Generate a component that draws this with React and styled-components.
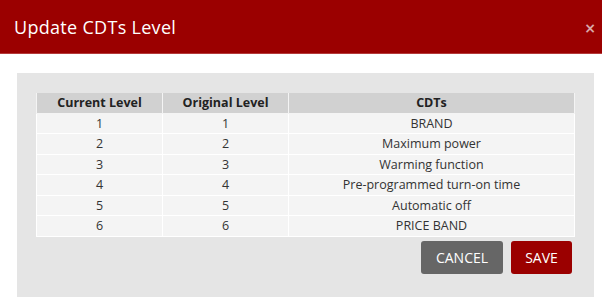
import React from "react";
import styled, { createGlobalStyle } from "styled-components";

const GlobalStyle = createGlobalStyle`
  body {
    margin: 0;
    background: #fff;
    font-family: "Open Sans", "Liberation Sans", sans-serif;
  }
`;

const rows = [
  [1, 1, "BRAND"],
  [2, 2, "Maximum power"],
  [3, 3, "Warming function"],
  [4, 4, "Pre-programmed turn-on time"],
  [5, 5, "Automatic off"],
  [6, 6, "PRICE BAND"],
];

const App = () => {
  return (
    <Modal>
      <GlobalStyle />
      <Header>
        <Title>Update CDTs Level</Title>
        <Close>×</Close>
      </Header>
      <Body>
        <Panel>
          <Table>
            <thead>
              <tr>
                <Th>Current Level</Th>
                <Th>Original Level</Th>
                <Th>CDTs</Th>
              </tr>
            </thead>
            <tbody>
              {rows.map(([cur, orig, name]) => (
                <tr key={cur}>
                  <Td>{cur}</Td>
                  <Td>{orig}</Td>
                  <Td>{name}</Td>
                </tr>
              ))}
            </tbody>
          </Table>
          <Actions>
            <Button $variant="cancel">CANCEL</Button>
            <Button $variant="save">SAVE</Button>
          </Actions>
        </Panel>
      </Body>
    </Modal>
  );
};

export default App;

const Modal = styled.div`
  width: 602px;
  height: 299px;
  overflow: hidden;
`;

const Header = styled.div`
  height: 53px;
  background: #9b0000;
  border-bottom: 1px solid #b43a3a;
  display: flex;
  align-items: center;
  justify-content: space-between;
  padding: 0 6px 0 14px;
`;

const Title = styled.h3`
  margin: 0;
  color: #fff;
  font-size: 18px;
  font-weight: 500;
  letter-spacing: 0.3px;
`;

const Close = styled.span`
  color: #d9a8a8;
  font-size: 14px;
  font-weight: 700;
  line-height: 1;
  font-family: "DejaVu Sans", sans-serif;
  margin-top: 2px;
`;

const Body = styled.div`
  padding: 19px 8px 0 17px;
`;

const Panel = styled.div`
  background: #e5e5e5;
  width: 577px;
  height: 224px;
  box-sizing: border-box;
  padding: 20px 19px 0 19px;
`;

const Table = styled.table`
  width: 539px;
  border-collapse: collapse;
  font-size: 12.5px;
  color: #333;
  table-layout: fixed;
  th:nth-child(1),
  th:nth-child(2) {
    width: 125px;
  }
`;

const Th = styled.th`
  background: #d1d1d1;
  height: 19.5px;
  line-height: 19px;
  padding: 0;
  border: 1px solid #f4f4f4;
  border-top: none;
  font-weight: 700;
  color: #222;
  text-align: center;
`;

const Td = styled.td`
  background: #f4f4f4;
  height: 19.5px;
  line-height: 19px;
  padding: 0;
  border: 1px solid #fff;
  text-align: center;
`;

const Actions = styled.div`
  display: flex;
  justify-content: flex-end;
  gap: 8px;
  margin-top: 4px;
  padding-right: 3px;
`;

const Button = styled.button`
  height: 33px;
  border: none;
  border-radius: 3px;
  padding: 0 12px;
  font-family: inherit;
  font-size: 14px;
  color: #fff;
  background: ${(p) => (p.$variant === "save" ? "#9b0000" : "#666666")};
  min-width: ${(p) => (p.$variant === "save" ? "61px" : "82px")};
`;
